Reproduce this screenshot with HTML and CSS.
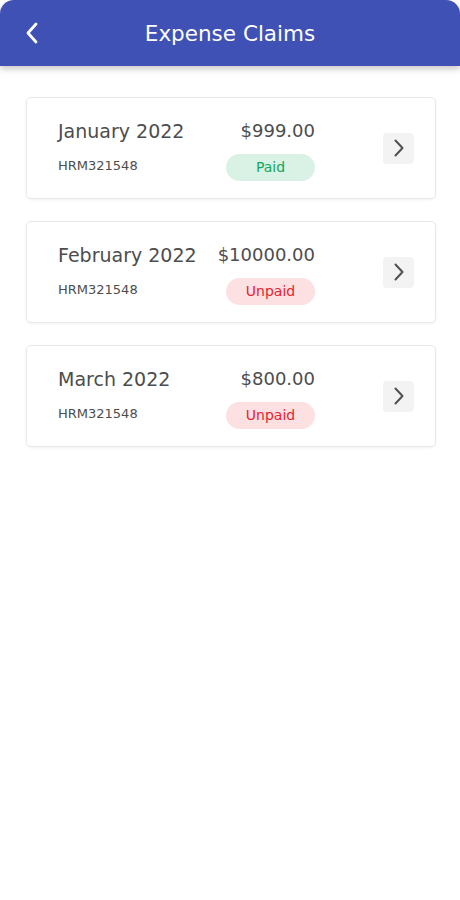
FILE: index.html
```html
<!DOCTYPE html>
<html lang="en">

<head>
    <meta charset="UTF-8">
    <meta name="viewport" content="width=device-width, initial-scale=1.0">
    <title>Expense Claims</title>
    <link rel="stylesheet" href="styles.css">
</head>

<body>
    <div id="app">
        <div class="topbar">
            <a class="back" href="#">
                <svg width="14" height="24" viewBox="0 0 14 24">
                    <path d="M11 3 L3 12 L11 21" fill="none" stroke="#fff" stroke-width="2.8" stroke-linecap="round" stroke-linejoin="round" />
                </svg>
            </a>
            <h1>Expense Claims</h1>
        </div>

        <ul class="claims">
            <li class="claim">
                <div class="claim-body">
                    <span class="month">January 2022</span>
                    <span class="amount">$999.00</span>
                    <span class="code">HRM321548</span>
                    <span class="status paid">Paid</span>
                </div>
                <span class="go">
                    <svg width="12" height="18" viewBox="0 0 12 18">
                        <path d="M2.5 1.5 L9.5 9 L2.5 16.5" fill="none" stroke="#505050" stroke-width="2" stroke-linecap="round" stroke-linejoin="round" />
                    </svg>
                </span>
            </li>
            <li class="claim">
                <div class="claim-body">
                    <span class="month">February 2022</span>
                    <span class="amount">$10000.00</span>
                    <span class="code">HRM321548</span>
                    <span class="status unpaid">Unpaid</span>
                </div>
                <span class="go">
                    <svg width="12" height="18" viewBox="0 0 12 18">
                        <path d="M2.5 1.5 L9.5 9 L2.5 16.5" fill="none" stroke="#505050" stroke-width="2" stroke-linecap="round" stroke-linejoin="round" />
                    </svg>
                </span>
            </li>
            <li class="claim">
                <div class="claim-body">
                    <span class="month">March 2022</span>
                    <span class="amount">$800.00</span>
                    <span class="code">HRM321548</span>
                    <span class="status unpaid">Unpaid</span>
                </div>
                <span class="go">
                    <svg width="12" height="18" viewBox="0 0 12 18">
                        <path d="M2.5 1.5 L9.5 9 L2.5 16.5" fill="none" stroke="#505050" stroke-width="2" stroke-linecap="round" stroke-linejoin="round" />
                    </svg>
                </span>
            </li>
        </ul>
    </div>
</body>

</html>
```

FILE: styles.css
```css
* {
    margin: 0;
    padding: 0;
    box-sizing: border-box;
}

li {
    list-style: none;
}

body {
    background: #fff;
    font-family: "DejaVu Sans", "Open Sans", sans-serif;
    color: #4d4d4d;
}

#app {
    width: 460px;
    min-height: 900px;
}

.topbar {
    height: 66px;
    background: #3f51b5;
    border-radius: 14px 14px 0 0;
    box-shadow: 0 3px 6px rgba(0, 0, 0, 0.22);
    display: flex;
    align-items: center;
    justify-content: center;
    position: relative;
}

.back {
    position: absolute;
    left: 25px;
    top: 21px;
    display: block;
    width: 14px;
    height: 24px;
}

.topbar h1 {
    color: #fff;
    font-size: 21.5px;
    font-weight: normal;
}

.claims {
    padding: 31px 24px 0 26px;
    display: flex;
    flex-direction: column;
    gap: 22px;
}

.claim {
    height: 102px;
    border: 1px solid #e8e8e8;
    border-radius: 5px;
    box-shadow: 0 1px 3px rgba(0, 0, 0, 0.06);
    display: flex;
    align-items: center;
    padding: 0 21px 0 31px;
}

.claim-body {
    width: 257px;
    display: grid;
    grid-template-columns: 1fr auto;
    align-items: center;
    row-gap: 11px;
    margin-top: 3px;
}

.month {
    font-size: 19px;
    line-height: 24px;
}

.amount {
    font-size: 18px;
    line-height: 24px;
    justify-self: end;
}

.code {
    font-size: 13px;
    line-height: 18px;
    align-self: start;
    margin-top: 3px;
}

.status {
    justify-self: end;
    width: 89px;
    height: 27px;
    line-height: 27px;
    border-radius: 14px;
    text-align: center;
    font-size: 14px;
}

.paid {
    background: #d9f2e5;
    color: #17a55a;
}

.unpaid {
    background: #fde0e2;
    color: #e8222e;
}

.go {
    margin-left: auto;
    width: 31px;
    height: 31px;
    background: #f3f3f3;
    border-radius: 4px;
    display: flex;
    align-items: center;
    justify-content: center;
}
```
